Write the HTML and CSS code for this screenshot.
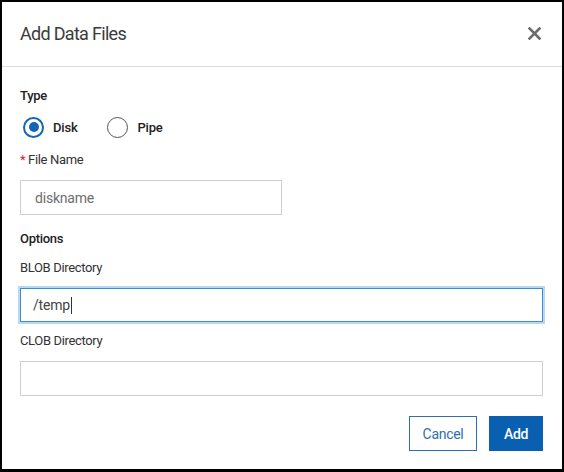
FILE: index.html
```html
<!DOCTYPE html>
<html>
<head>
<meta charset="utf-8">
<link rel="stylesheet" href="styles.css">
</head>
<body>
<div class="dialog">
  <div class="header">
    <h1 class="title">Add Data Files</h1>
    <button class="close" aria-label="Close">
      <svg width="13" height="13" viewBox="0 0 13 13"><path d="M1.5 1.5 L11.5 11.5 M11.5 1.5 L1.5 11.5" stroke="#6b6b6b" stroke-width="2.6" stroke-linecap="square"/></svg>
    </button>
  </div>
  <div class="body">
    <div class="section-label type-label">Type</div>
    <div class="radio-row">
      <label class="radio"><span class="circle checked"><span class="dot"></span></span><span class="radio-text">Disk</span></label>
      <label class="radio"><span class="circle"></span><span class="radio-text">Pipe</span></label>
    </div>
    <div class="field-label req-label"><span class="req">*</span> File Name</div>
    <div class="input short"><span class="placeholder">diskname</span></div>
    <div class="section-label options-label">Options</div>
    <div class="field-label">BLOB Directory</div>
    <div class="input focused"><span class="value">/temp</span><span class="caret"></span></div>
    <div class="field-label clob-label">CLOB Directory</div>
    <div class="input"></div>
    <div class="footer">
      <button class="btn secondary">Cancel</button>
      <button class="btn primary">Add</button>
    </div>
  </div>
</div>
</body>
</html>
```
FILE: styles.css
```css
* { box-sizing: border-box; }
html, body { margin: 0; padding: 0; background: #000; }
body { font-family: Roboto, "Noto Sans", Arial, sans-serif; color: #333; }

.dialog {
  width: 564px;
  height: 472px;
  background: #fff;
  border: 2px solid #000;
  border-bottom-width: 3px;
  display: flex;
  flex-direction: column;
}

.header {
  height: 65px;
  border-bottom: 1px solid #dcdcdc;
  display: flex;
  align-items: center;
  justify-content: space-between;
  padding: 0 21px 0 18px;
}
.title {
  margin: 0;
  font-size: 18px;
  font-weight: 400;
  color: #3b3b3b;
  line-height: 24px;
  letter-spacing: -0.7px;
}
.close {
  border: 0;
  background: none;
  padding: 0;
  width: 13px;
  height: 13px;
  display: flex;
  margin-top: -2px;
}

.body {
  padding: 0 19px 0 18px;
  display: flex;
  flex-direction: column;
}

.section-label {
  font-size: 13px;
  font-weight: 500;
  color: #222;
  line-height: 18px;
  letter-spacing: -0.3px;
}
.type-label { margin-top: 20px; }
.options-label { margin-top: 15px; }

.radio-row {
  display: flex;
  align-items: center;
  height: 22px;
  margin-top: 11px;
  padding-left: 3px;
  gap: 30px;
}
.radio { display: flex; align-items: center; gap: 9px; }
.circle {
  width: 21px;
  height: 21px;
  border-radius: 50%;
  border: 1.5px solid #555;
  display: flex;
  align-items: center;
  justify-content: center;
}
.circle.checked { border: 2px solid #1565b4; }
.dot { width: 10px; height: 10px; border-radius: 50%; background: #1565b4; }
.radio-text { font-size: 13px; font-weight: 500; color: #222; letter-spacing: -0.2px; }

.field-label {
  font-size: 13px;
  color: #333;
  line-height: 18px;
  margin-top: 11px;
  letter-spacing: -0.35px;
}
.req-label { margin-top: 13px; }
.clob-label { margin-top: 10px; }
.req { color: #d9262b; }

.input {
  margin-top: 11px;
  height: 35px;
  border: 1px solid #cfcfcf;
  display: flex;
  align-items: center;
  padding-left: 14px;
  font-size: 14px;
  color: #444;
  letter-spacing: -0.2px;
}
.input.short { width: 262px; }
.placeholder { color: #6e6e6e; }
.input.focused {
  height: 34px;
  border: 1px solid #3d8fd1;
  box-shadow: 0 0 0 2px #b9d9f2;
  padding-left: 12px;
}
.caret { width: 1px; height: 17px; background: #333; margin-left: 1px; }

.footer {
  margin-top: 20px;
  display: flex;
  justify-content: flex-end;
  gap: 12px;
}
.btn {
  height: 35px;
  font-family: Roboto, "Noto Sans", Arial, sans-serif;
  font-size: 14px;
  padding: 0;
  border-radius: 0;
  letter-spacing: -0.3px;
}
.secondary {
  width: 68px;
  background: #fff;
  color: #2f6fae;
  border: 1px solid #2f6fae;
}
.primary {
  width: 54px;
  background: #0a60b0;
  color: #fff;
  border: 0;
  font-weight: 500;
}
```
